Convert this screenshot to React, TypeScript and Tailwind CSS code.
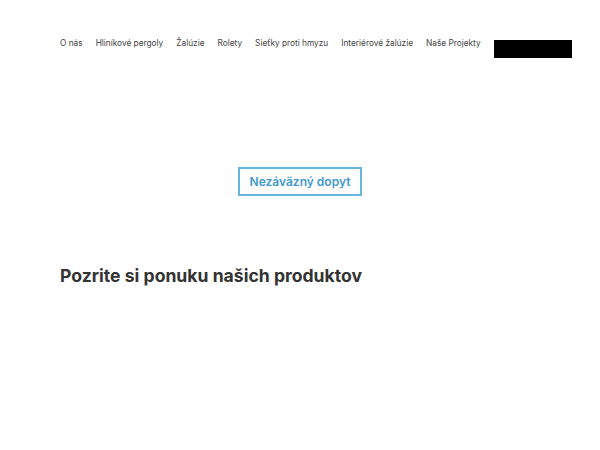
export default function App() {
  const links = [
    "O nás",
    "Hliníkové pergoly",
    "Žalúzie",
    "Rolety",
    "Sieťky proti hmyzu",
    "Interiérové žalúzie",
    "Naše Projekty",
  ];
  return (
    <div className="w-[600px] h-[450px] bg-white font-['Inter',sans-serif] overflow-hidden">
      <header className="flex items-center pl-[60px] pt-[40px] h-[58px]">
        <nav className="flex items-center gap-[13px] h-[18px] -mt-[12px]">
          {links.map((l) => (
            <a key={l} className="text-[8.3px] text-[#444] leading-none whitespace-nowrap">
              {l}
            </a>
          ))}
        </nav>
        <div className="ml-[13px] w-[78px] h-[18px] bg-black" />
      </header>
      <div className="flex justify-center mt-[109px]">
        <button className="w-[124px] h-[29px] border-2 border-[#66b6df] text-[#4199cc] text-[12px] font-semibold">
          Nezáväzný dopyt
        </button>
      </div>
      <h2 className="mt-[67px] pl-[60px] text-[17.6px] font-bold text-[#333] leading-[26px]">
        Pozrite si ponuku našich produktov
      </h2>
    </div>
  );
}
